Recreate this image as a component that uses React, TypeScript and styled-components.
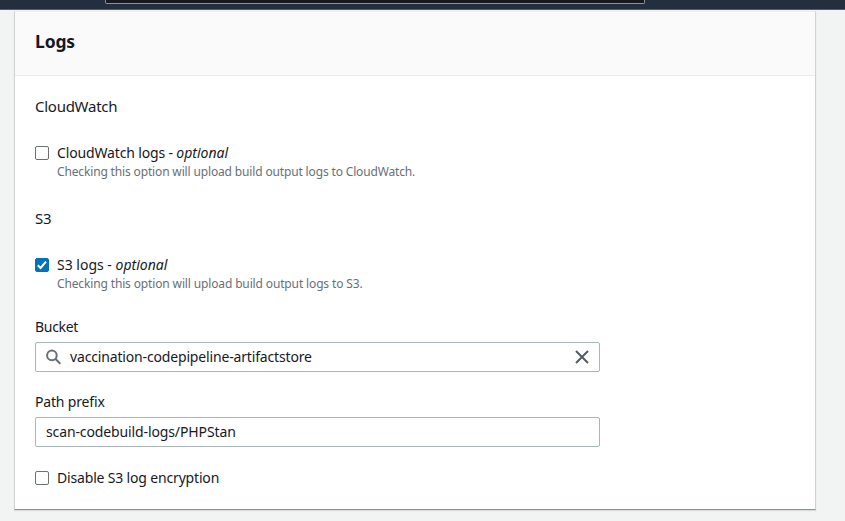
import React from 'react';
import styled, { createGlobalStyle, css } from 'styled-components';

const GlobalStyle = createGlobalStyle`
  * { box-sizing: border-box; }
  html, body { margin: 0; background: #f2f3f3; overflow: hidden; }
  body { font-family: "Noto Sans", "Open Sans", sans-serif; font-size: 14px; line-height: 22px; color: #16191f; }
`;

const Page = styled.div`
  height: 521px;
  overflow: hidden;
`;

const TopBar = styled.header`
  height: 10px;
  margin-bottom: 1px;
  padding-left: 105px;
  background: #232f3e;
  border-bottom: 1px solid #545b64;
`;

const SearchEdge = styled.div`
  width: 540px;
  height: 4px;
  background: #16191f;
  border: 1px solid #879596;
  border-top: 0;
  border-radius: 0 0 2px 2px;
`;

const Panel = styled.section`
  width: 802px;
  height: 499px;
  margin-left: 14px;
  background: #fff;
  border: 1px solid #cfd3d3;
  border-top-color: #eaeded;
  border-bottom-color: #879596;
  box-shadow: 0 1px 1px rgba(0, 28, 36, 0.1);
`;

const PanelHeader = styled.div`
  height: 64px;
  padding: 18px 20px 0;
  background: #fafafa;
  border-bottom: 1px solid #eaeded;
`;

const Title = styled.h2`
  margin: 0;
  font-size: 17.5px;
  line-height: 22px;
  font-weight: 700;
  letter-spacing: -0.15px;
`;

const Body = styled.div`
  padding: 20px 20px 0;
`;

const SectionName = styled.div`
  height: 22px;
  margin-bottom: 24px;
  font-size: 15px;
  line-height: 20px;
  letter-spacing: -0.26px;
`;

const OptionRow = styled.label<{ $gap?: number }>`
  display: flex;
  gap: 8px;
  margin-bottom: ${(p) => p.$gap ?? 0}px;
`;

const Box = styled.span<{ $checked?: boolean }>`
  display: flex;
  flex: none;
  width: 14px;
  height: 14px;
  margin-top: 4px;
  border: 1px solid #687078;
  border-radius: 2px;
  ${(p) => p.$checked && css`background: #0073bb; border-color: #0073bb;`}
`;

const Text = styled.span<{ $track?: number }>`
  letter-spacing: ${(p) => p.$track ?? 0}px;
`;

const Hint = styled.div<{ $track: number }>`
  font-size: 12px;
  line-height: 16px;
  color: #687078;
  letter-spacing: ${(p) => p.$track}px;
`;

const Field = styled.div<{ $gap: number }>`
  display: flex;
  flex-direction: column;
  gap: 4px;
  margin-bottom: ${(p) => p.$gap}px;
`;

const InputFrame = styled.div`
  display: flex;
  align-items: center;
  width: 565px;
  height: 30px;
  padding: 0 10px;
  border: 1px solid #aab7b8;
  border-radius: 2px;
`;

const Value = styled(Text)`
  flex: 1;
`;

const Icon = styled.svg`
  flex: none;
  fill: none;
  stroke: #687078;
  stroke-width: 2;
`;

const SearchIcon = styled(Icon)`
  margin-right: 8px;
`;

const ClearIcon = styled(Icon)`
  margin-right: -1px;
  stroke: #545b64;
`;

interface OptionProps {
  label: string;
  hint: string;
  track?: number;
  hintTrack: number;
  gap: number;
  checked?: boolean;
}

function Option({ label, hint, track, hintTrack, gap, checked }: OptionProps) {
  return (
    <OptionRow $gap={gap}>
      <Box $checked={checked}>
        {checked && (
          <svg width="12" height="12" viewBox="0 0 12 12" fill="none" stroke="#fff" strokeWidth="2">
            <path d="M1.8 6.2l2.8 2.8L10 2.6" />
          </svg>
        )}
      </Box>
      <div>
        <div><Text $track={track}>{label} - </Text><em>optional</em></div>
        <Hint $track={hintTrack}>{hint}</Hint>
      </div>
    </OptionRow>
  );
}

export default function App() {
  return (
    <Page>
      <GlobalStyle />
      <TopBar><SearchEdge /></TopBar>
      <Panel>
        <PanelHeader><Title>Logs</Title></PanelHeader>
        <Body>
          <SectionName>CloudWatch</SectionName>
          <Option
            label="CloudWatch logs"
            hint="Checking this option will upload build output logs to CloudWatch."
            track={-0.15}
            hintTrack={-0.15}
            gap={28}
          />
          <SectionName>S3</SectionName>
          <Option
            label="S3 logs"
            hint="Checking this option will upload build output logs to S3."
            hintTrack={-0.14}
            gap={24}
            checked
          />
          <Field $gap={19}>
            <Text $track={-0.3}>Bucket</Text>
            <InputFrame>
              <SearchIcon width="16" height="16" viewBox="0 0 16 16">
                <circle cx="5.9" cy="6.4" r="4.8" />
                <path d="M9.3 9.8l5 5" />
              </SearchIcon>
              <Value $track={-0.16}>vaccination-codepipeline-artifactstore</Value>
              <ClearIcon width="16" height="16" viewBox="0 0 16 16"><path d="M2 2l12 12M14 2L2 14" /></ClearIcon>
            </InputFrame>
          </Field>
          <Field $gap={20}>
            <Text $track={-0.17}>Path prefix</Text>
            <InputFrame><Value $track={-0.12}>scan-codebuild-logs/PHPStan</Value></InputFrame>
          </Field>
          <OptionRow><Box /><Text $track={-0.17}>Disable S3 log encryption</Text></OptionRow>
        </Body>
      </Panel>
    </Page>
  );
}
